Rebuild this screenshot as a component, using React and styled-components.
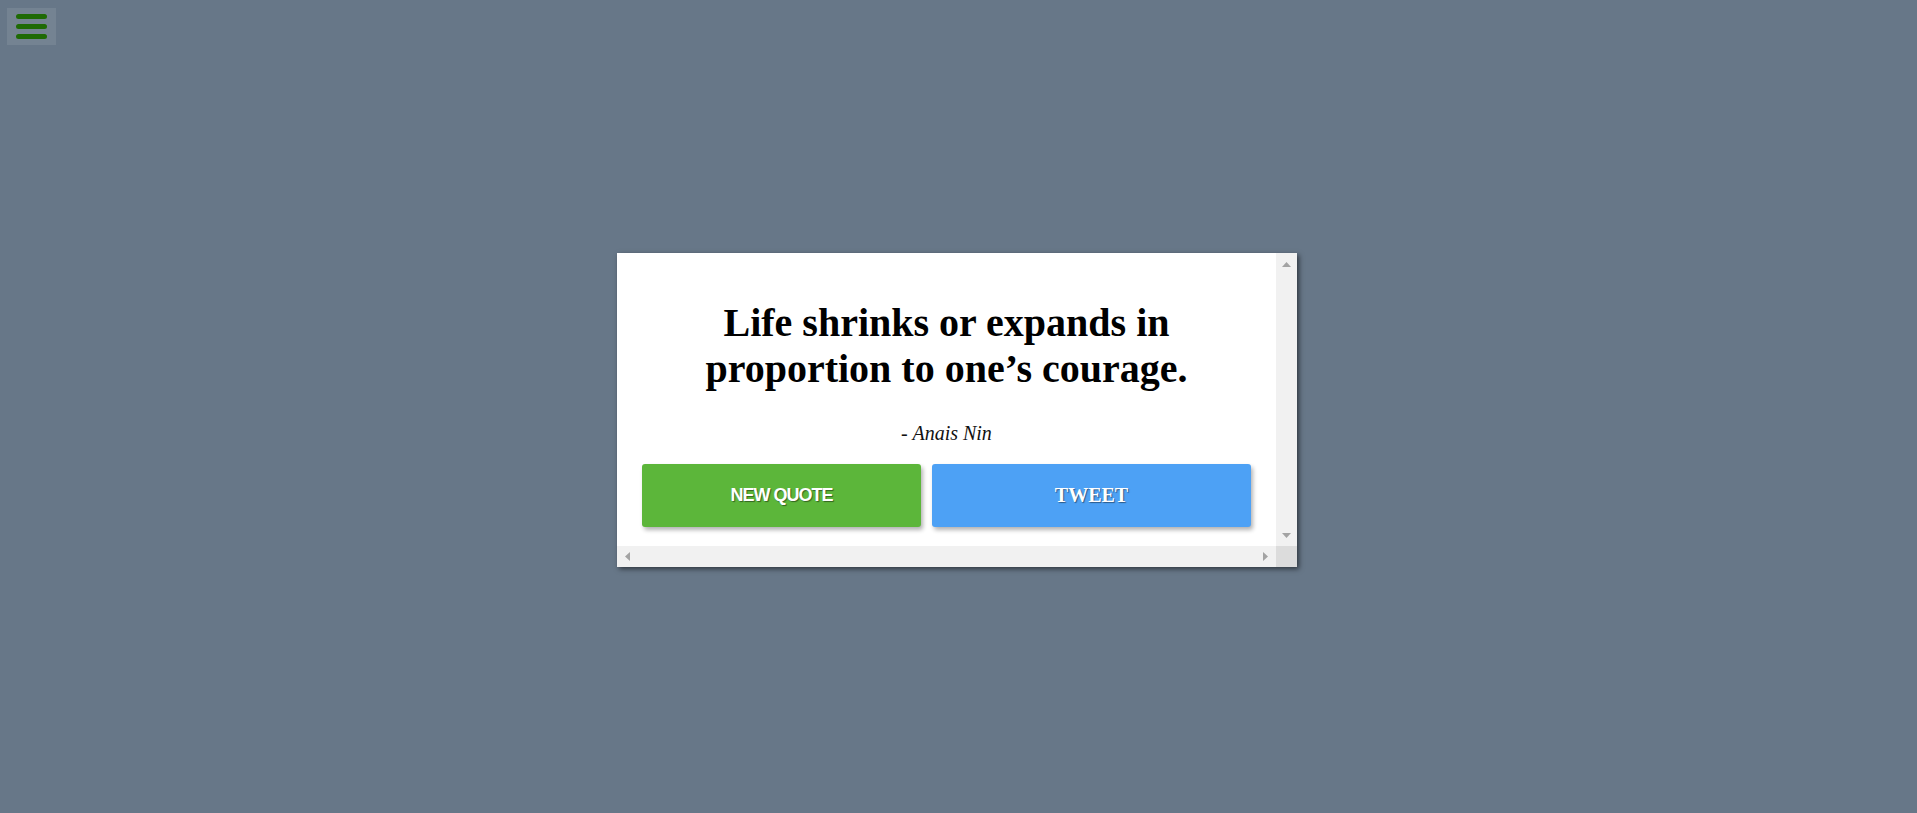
import React from "react";
import styled, { createGlobalStyle } from "styled-components";

const GlobalStyle = createGlobalStyle`
	html, body {
		margin: 0;
		padding: 0;
		background: #677788;
	}
	body {
		font-family: "Liberation Serif", "Times New Roman", serif;
	}
`;

const Page = styled.div`
	min-height: 100vh;
	box-sizing: border-box;
	display: flex;
	align-items: center;
	justify-content: center;
	padding: 7px 3px 0 0;
`;

const MenuButton = styled.button`
	position: absolute;
	top: 8px;
	left: 7px;
	width: 49px;
	height: 37px;
	padding: 0;
	border: none;
	background: rgba(255, 255, 255, 0.09);
	display: flex;
	flex-direction: column;
	align-items: center;
	justify-content: center;
	gap: 5px;
	cursor: pointer;
	& span {
		display: block;
		width: 31px;
		height: 5px;
		border-radius: 3px;
		background: #1e6a05;
	}
`;

const Card = styled.div`
	width: 680px;
	height: 314px;
	background: #fff;
	box-shadow: 2px 2px 5px rgba(0, 0, 0, 0.55);
	display: grid;
	grid-template-columns: 1fr 21px;
	grid-template-rows: 1fr 21px;
	overflow: hidden;
`;

const Track = styled.div`
	background: #f1f1f1;
	display: flex;
	flex-direction: ${(p) => (p.$vertical ? "column" : "row")};
	justify-content: space-between;
	align-items: center;
`;

const Corner = styled.div`
	background: #dcdcdc;
`;

const ArrowBox = styled.svg`
	display: block;
	width: 21px;
	height: 21px;
	flex: none;
	fill: #a3a3a3;
`;

const Arrow = ({ d }) => (
	<ArrowBox viewBox="0 0 21 21">
		<path d={d} />
	</ArrowBox>
);

const Content = styled.div`
	padding: 47px 25px 0;
	text-align: center;
	min-width: 0;
`;

const Quote = styled.h1`
	margin: 0 auto;
	max-width: 500px;
	font-family: "Liberation Serif", "Times New Roman", serif;
	font-size: 40px;
	font-weight: 700;
	line-height: 46px;
	color: #000;
`;

const Author = styled.p`
	margin: 30px 0 19px;
	font-family: "Liberation Serif", "Times New Roman", serif;
	font-size: 20px;
	font-style: italic;
	line-height: 23px;
	color: #111;
`;

const Actions = styled.div`
	display: grid;
	grid-template-columns: 279fr 319fr;
	gap: 11px;
`;

const ActionButton = styled.button`
	height: 63px;
	border: none;
	border-radius: 3px;
	background: ${(p) => p.$bg};
	color: #fff;
	font-family: ${(p) =>
		p.$serif
			? `"Liberation Serif", "Times New Roman", serif`
			: `"Liberation Sans", Arial, sans-serif`};
	font-size: ${(p) => (p.$serif ? "20px" : "18px")};
	font-weight: 700;
	letter-spacing: ${(p) => (p.$serif ? "0" : "-1px")};
	text-shadow: 1px 1px 1px rgba(0, 0, 0, 0.45);
	box-shadow: 2px 3px 4px rgba(0, 0, 0, 0.3);
	display: flex;
	align-items: center;
	justify-content: center;
	cursor: pointer;
`;

export default function App() {
	return (
		<>
			<GlobalStyle />
			<MenuButton aria-label="menu">
				<span />
				<span />
				<span />
			</MenuButton>
			<Page>
				<Card>
					<Content>
						<Quote>Life shrinks or expands in proportion to one’s courage.</Quote>
						<Author>- Anais Nin</Author>
						<Actions>
							<ActionButton $bg="#5cb63a">NEW QUOTE</ActionButton>
							<ActionButton $bg="#4da1f5" $serif>TWEET</ActionButton>
						</Actions>
					</Content>
					<Track $vertical>
						<Arrow d="M6 14h9l-4.5-5z" />
						<Arrow d="M6 8h9l-4.5 5z" />
					</Track>
					<Track>
						<Arrow d="M13 6v9l-5-4.5z" />
						<Arrow d="M8 6v9l5-4.5z" />
					</Track>
					<Corner />
				</Card>
			</Page>
		</>
	);
}
